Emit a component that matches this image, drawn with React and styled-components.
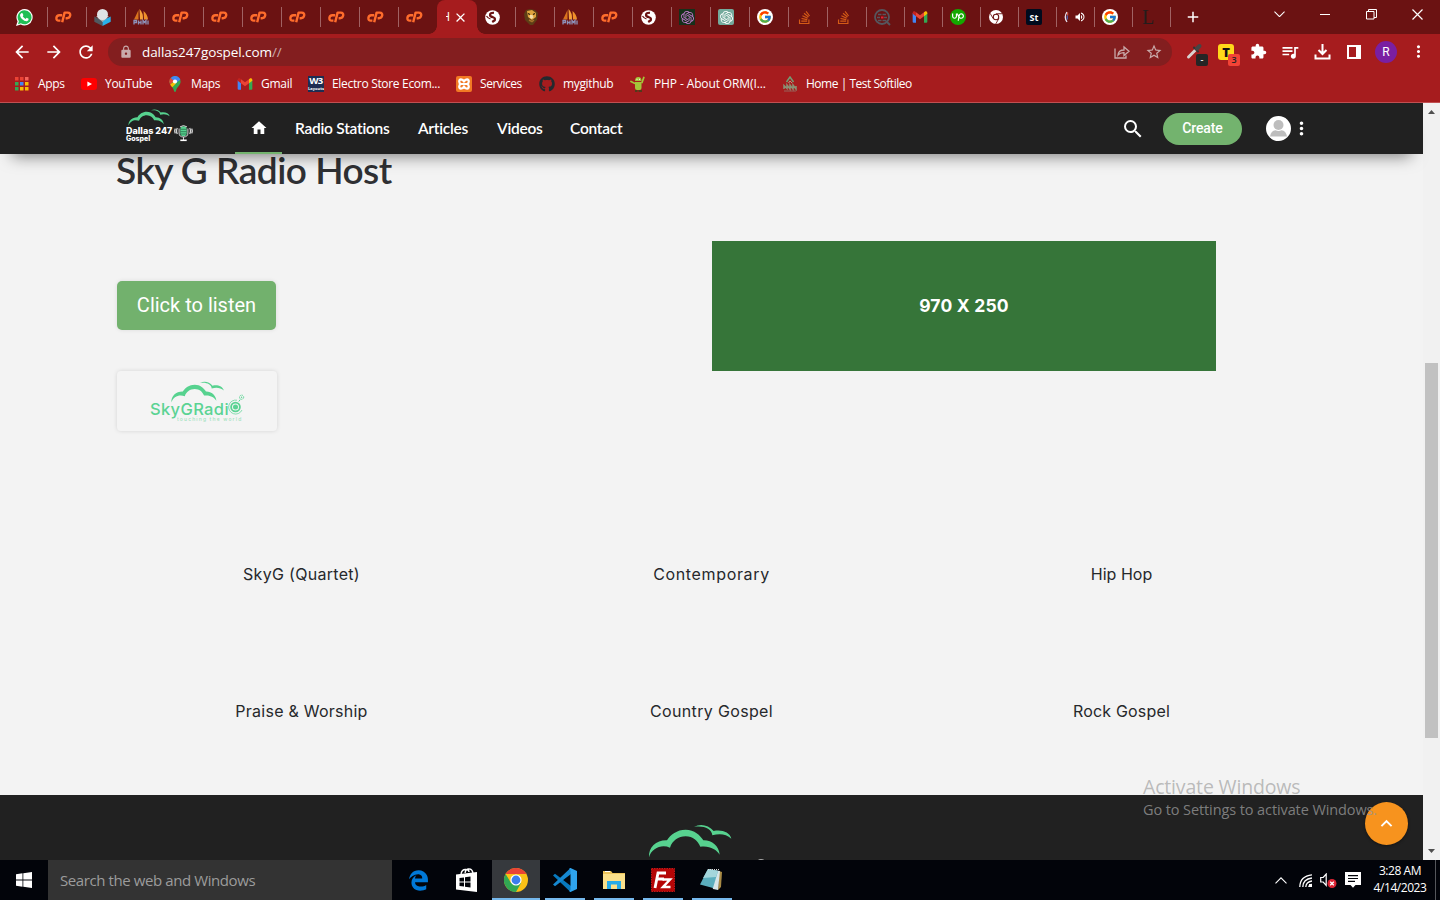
import React from "react";
import styled, { createGlobalStyle, css } from "styled-components";
import { FaGithub, FaEdgeLegacy, FaStackOverflow, FaUpwork } from "react-icons/fa6";
import { SiOpenai } from "react-icons/si";
import { FcGoogle } from "react-icons/fc";
import {
  MdArrowBack, MdArrowForward, MdRefresh, MdLock, MdStarBorder, MdExtension,
  MdQueueMusic, MdMoreVert, MdHome, MdSearch, MdAdd, MdClose, MdVolumeUp,
  MdKeyboardArrowUp,
} from "react-icons/md";

const segoe = '"Open Sans", "Noto Sans", sans-serif';

const GlobalStyle = createGlobalStyle`
  * { box-sizing: border-box; }
  body { margin: 0; background: #f3f3f3; overflow: hidden; }
  svg { display: block; flex: none; }
`;

const Screen = styled.div`
  position: relative;
  width: 1440px;
  height: 900px;
  display: flex;
  flex-direction: column;
  overflow: hidden;
  font-family: ${segoe};
`;

/* Browser chrome */
const TabStrip = styled.div`
  display: flex;
  height: 34px;
  padding-left: 9px;
  background: #6b1212;
  color: #fff;
`;
const Tab = styled.div`
  display: flex;
  align-items: center;
  flex: none;
  width: ${(p) => p.$w || 39}px;
  height: 34px;
  padding-left: 7px;
  &::after {
    content: "";
    width: 1px;
    height: 20px;
    margin-left: auto;
    background: ${(p) => (p.$noLine ? "transparent" : "#a06263")};
  }
`;
const ActiveTab = styled.div`
  display: flex;
  align-items: center;
  flex: none;
  width: 40px;
  margin-left: -1px;
  padding-left: 9px;
  height: 34px;
  background: #a61c1e;
  border-radius: 8px 8px 0 0;
  position: relative;
  &::before, &::after {
    content: "";
    position: absolute;
    bottom: 0;
    width: 8px;
    height: 8px;
  }
  &::before { left: -8px; background: radial-gradient(circle at 0 0, transparent 7.5px, #a61c1e 8px); }
  &::after { right: -8px; background: radial-gradient(circle at 100% 0, transparent 7.5px, #a61c1e 8px); }
`;
const ClippedTitle = styled.span`
  width: 4px;
  overflow: hidden;
  font-size: 12px;
  line-height: 16px;
  margin-right: 3px;
  direction: rtl;
`;
const Favicon = styled.span`
  display: flex;
  align-items: center;
  justify-content: center;
  flex: none;
  width: 16px;
  height: 16px;
  color: ${(p) => p.$color || "#fff"};
  background: ${(p) => p.$bg || "none"};
  border-radius: ${(p) => p.$r || 0};
  font: ${(p) => p.$font || "700 9px " + segoe};
`;
const NewTab = styled.div`
  display: flex;
  align-items: center;
  padding-left: 13px;
`;
const WindowControls = styled.div`
  display: flex;
  margin-left: auto;
  height: 28px;
  & > span { width: 46px; display: grid; place-items: center; }
`;

const Toolbar = styled.div`
  display: flex;
  align-items: center;
  height: 35px;
  padding-left: 6px;
  background: #a61c1e;
  color: #fff;
`;
const ToolSlot = styled.div`
  position: relative;
  display: grid;
  place-items: center;
  flex: none;
  width: 32px;
  height: 32px;
`;
const Omnibox = styled.div`
  display: flex;
  align-items: center;
  width: 1064px;
  height: 28px;
  margin: 0 6px;
  padding: 0 2px 0 11px;
  border-radius: 14px;
  background: #831e1f;
  color: #c9aaaa;
`;
const Url = styled.span`
  flex: 1;
  margin-left: 9px;
  font-size: 13.5px;
  letter-spacing: -0.08px;
  line-height: 20px;
  b { font-weight: 400; color: #fff; }
`;
const ExtBadge = styled.span`
  position: absolute;
  left: ${(p) => p.$x}px;
  top: 18px;
  width: 12px;
  height: 12px;
  border-radius: 2px;
  background: ${(p) => p.$bg};
  color: ${(p) => p.$fg};
  font: 600 9px/12px ${segoe};
  text-align: center;
`;
const ExtT = styled.span`
  width: 16px;
  height: 16px;
  border-radius: 3px;
  background: #ffd91a;
  color: #111;
  font: 800 13px/16px ${segoe};
  text-align: center;
`;
const Profile = styled.span`
  width: 22px;
  height: 22px;
  border-radius: 50%;
  background: #7a1fa2;
  font: 400 12px/22px Roboto, sans-serif;
  text-align: center;
`;

const Bookmarks = styled.div`
  display: flex;
  align-items: center;
  gap: 16px;
  height: 34px;
  padding: 0 14px 4px;
  background: #a61c1e;
  border-bottom: 1px solid #c05052;
  color: #fff;
`;
const Bookmark = styled.div`
  display: flex;
  align-items: center;
  gap: 8px;
  font-size: 12px;
  line-height: 16px;
  white-space: nowrap;
`;
const BookmarkText = styled.span`
  width: ${(p) => p.$w}px;
  letter-spacing: ${(p) => p.$ls}px;
`;

/* Web page */
const Viewport = styled.div`
  display: flex;
  height: 757px;
`;
const Page = styled.div`
  width: 1423px;
  display: flex;
  flex-direction: column;
  background: #f3f3f3;
`;
const Nav = styled.header`
  position: relative;
  display: flex;
  align-items: stretch;
  flex: none;
  height: 51px;
  padding-left: 126px;
  background: #212121;
  color: #fff;
  box-shadow: 0 14px 16px -12px rgba(0, 0, 0, 0.5);
`;
const NavLogo = styled.div`
  width: 109px;
  padding: 6px 0 0;
  display: flex;
  flex-direction: column;
  & > svg { margin-left: 2px; }
`;
const NavLogoRow = styled.div`
  display: flex;
  height: 18px;
  & > svg { margin-top: -1px; }
`;
const LogoWords = styled.div`
  width: 48px;
  white-space: nowrap;
  font: 800 9px/10px Inter, sans-serif;
  div + div { font-size: 7px; line-height: 8px; margin-top: -1px; }
`;
const HomeLink = styled.div`
  display: grid;
  place-items: center;
  width: 47px;
  border-bottom: 2px solid #73b36e;
`;
const NavLink = styled.a`
  width: ${(p) => p.$w}px;
  margin-left: ${(p) => p.$gap}px;
  font: 600 15.5px/51px Lato, sans-serif;
  letter-spacing: -0.25px;
  white-space: nowrap;
`;
const NavActions = styled.div`
  display: flex;
  align-items: center;
  margin-left: auto;
  padding-right: 111px;
`;
const CreateButton = styled.div`
  width: 79px;
  height: 32px;
  margin: 0 24px 0 18px;
  border-radius: 16px;
  background: #73b36e;
  font: 500 14px/31px Roboto, sans-serif;
  letter-spacing: -0.1px;
  text-align: center;
`;
const Hero = styled.section`
  height: 343px;
  padding-left: 117px;
`;
const Title = styled.h1`
  margin: 0 0 0 -1px;
  color: #2f3033;
  font: 600 37px/32px Lato, sans-serif;
  letter-spacing: -0.5px;
  white-space: nowrap;
`;
const HeroColumns = styled.div`
  display: grid;
  grid-template-columns: 595px 504px;
`;
const ListenButton = styled.div`
  width: 159px;
  height: 49px;
  margin-top: 95px;
  border-radius: 5px;
  background: #72b16d;
  color: #fff;
  font: 400 20px/48px Roboto, sans-serif;
  text-align: center;
  box-shadow: 0 0 4px rgba(0, 0, 0, 0.1);
`;
const RadioCard = styled.div`
  display: flex;
  flex-direction: column;
  width: 160px;
  height: 60px;
  margin-top: 41px;
  padding: 10px 0 0 33px;
  border-radius: 4px;
  background: #f4f4f4;
  box-shadow: 0 0 4px rgba(0, 0, 0, 0.13);
  color: #5bd393;
  & > svg { margin-left: 21px; }
`;
const RadioName = styled.div`
  display: flex;
  height: 18px;
  margin-top: -3px;
  font: 500 16.5px/18px Inter, sans-serif;
  letter-spacing: 0.35px;
  span { width: 78px; white-space: nowrap; }
  svg { margin-top: -6px; }
`;
const Tagline = styled.div`
  margin-left: 27px;
  margin-top: -1px;
  font: 500 5px/5px Inter, sans-serif;
  letter-spacing: 1.15px;
  white-space: nowrap;
  opacity: 0.55;
`;
const AdBanner = styled.div`
  height: 130px;
  margin-top: 55px;
  background: #367539;
  color: #fff;
  font: 700 17.5px/130px Inter, sans-serif;
  letter-spacing: 0.2px;
  text-align: center;
`;
const Genres = styled.section`
  display: grid;
  grid-template-columns: repeat(3, 410px);
  grid-auto-rows: 137px;
  height: 298px;
  justify-content: center;
  padding-top: 9px;
`;
const Genre = styled.div`
  color: #26282b;
  font: 400 16px/137px Inter, sans-serif;
  letter-spacing: ${(p) => p.$ls}px;
  text-align: center;
`;
const Footer = styled.footer`
  display: flex;
  flex: 1;
  background: #212121;
  padding: 29px 0 0 648px;
  overflow: hidden;
`;
const FooterMark = styled.span`
  width: 8px;
  height: 8px;
  margin: 35px 0 0 25px;
  border-radius: 50%;
  background: #a8a8a8;
`;
const ScrollTrack = styled.div`
  display: flex;
  flex-direction: column;
  align-items: center;
  justify-content: space-between;
  width: 17px;
  padding: 7px 0;
  background: #f1f1f1;
`;
const ScrollThumb = styled.div`
  width: 13px;
  height: 375px;
  margin-top: 138px;
  background: #c1c1c1;
`;
const ScrollTop = styled.div`
  position: absolute;
  left: 1365px;
  top: 802px;
  width: 43px;
  height: 43px;
  display: grid;
  place-items: center;
  border-radius: 50%;
  background: #f7931e;
  color: #fff;
  box-shadow: 0 1px 3px rgba(0, 0, 0, 0.4);
`;
const Watermark = styled.div`
  position: absolute;
  left: 1143px;
  top: 774px;
  color: rgba(150, 150, 150, 0.62);
  white-space: nowrap;
  font: 400 19.5px/26px ${segoe};
  letter-spacing: -0.17px;
  div + div { font-size: 14.5px; line-height: 20px; letter-spacing: -0.1px; color: rgba(150, 150, 150, 0.8); }
`;

/* Windows taskbar */
const Taskbar = styled.div`
  display: flex;
  height: 40px;
  background: #02040a;
  color: #fff;
`;
const StartButton = styled.div`
  width: 48px;
  display: grid;
  place-items: center;
`;
const SearchBox = styled.div`
  width: 344px;
  margin-right: 2px;
  padding-left: 12px;
  background: #333;
  color: #9c9c9c;
  font: 400 15px/41px ${segoe};
  letter-spacing: -0.41px;
`;
const TaskItem = styled.div`
  position: relative;
  display: grid;
  place-items: center;
  width: 48px;
  margin-right: 1px;
  background: ${(p) => (p.$active ? "#36393d" : "none")};
  ${(p) => p.$open && css`
    &::after {
      content: "";
      position: absolute;
      bottom: 0;
      left: ${p.$active ? 0 : 4}px;
      right: ${p.$active ? 0 : 4}px;
      height: 2px;
      background: #76b9ed;
    }
  `}
`;
const Tray = styled.div`
  display: flex;
  align-items: center;
  margin-left: auto;
  padding-right: 4px;
`;
const TrayIcons = styled.div`
  display: flex;
  align-items: center;
  gap: 8px;
  & > svg:first-child { margin-right: 4px; }
`;
const Clock = styled.div`
  width: 54px;
  margin: 0 8px 0 12px;
  text-align: center;
  font: 400 12px/17px ${segoe};
  letter-spacing: -0.45px;
  white-space: nowrap;
  padding-bottom: 2px;
`;
const ShowDesktop = styled.div`
  width: 1px;
  height: 40px;
  background: #55575b;
`;

/* Drawings */
const Cloud = ({ width, height }) => (
  <svg width={width} height={height} viewBox="0 0 250 102" fill="#57d28f">
    <path d="M2 100C0 70 24 48 56 49C66 32 86 17 112 17C138 17 156 34 165 49C190 48 212 66 214 92C204 76 184 64 156 68C148 50 134 37 112 37C90 37 72 50 65 71C40 60 10 72 2 100Z" />
    <path d="M137 9C155-2 180 2 196 21C220 16 244 24 249 44C234 30 214 28 192 34C190 14 165 4 137 9Z" />
  </svg>
);
const CPanel = () => (
  <svg width="17" height="12" viewBox="0 0 17 12" fill="none" stroke="#ff6c2c" strokeWidth="2.4" strokeLinejoin="round">
    <path d="M7.200 4.200H4.300Q1.800 4.200 1.400 6.900 1.200 9.600 3.800 9.600H5.400" />
    <path d="M7.200 11.200L9.600 1.600H12.800Q15.600 1.700 15.200 4.600 14.600 7.200 12 7.200H10.600" />
  </svg>
);
const WhatsApp = () => (
  <svg width="17" height="17" viewBox="0 0 17 17">
    <path d="M8.600 0a8.200 8.200 0 1 1-3.900 15.500L0 17l1.500-4.600A8.300 8.300 0 0 1 8.600 0z" fill="#fff" />
    <path d="M8.600 1.300a7 7 0 1 1-3.700 13L2 15.200l.9-2.900A7 7 0 0 1 8.600 1.300z" fill="#20bf55" />
    <path d="M5.300 4.300q.8-.5 1.400.2l.7 1.700-.7 1.100q1 1.900 2.900 2.600l1-1.100 2 1q.3 1.900-1.700 2.500-2.200.3-4.900-2.300Q3.300 7 4.300 5.200z" fill="#fff" />
  </svg>
);
const Mic = () => (
  <svg width="19" height="17" viewBox="0 0 19 17" fill="none" stroke="#d5d5d5">
    <rect x="6.300" y="1.300" width="6.400" height="10" rx="3.200" fill="#57d28f" stroke="none" />
    <path d="M6.500 4.300h6M6.500 6.700h6M6.500 9h6" stroke="#20623f" strokeWidth=".7" />
    <path d="M5.100 3.500v4.500q0 4 4.400 4t4.400-4V3.500M6 1.900Q9.500-.8 13 1.900M9.500 12v3" strokeWidth="1" />
    <path d="M6.300 15.300h6.400" strokeWidth="1.600" stroke="#fff" />
    <path d="M3.300 3q-1.600 3 0 6M1.400 3.600q-1.400 2.500 0 4.800M15.700 3q1.600 3 0 6M17.600 3.600q1.400 2.500 0 4.800" strokeWidth="1.300" />
  </svg>
);
const Disc = () => (
  <svg width="18" height="21" viewBox="0 0 18 21" fill="none" stroke="#5bd393">
    <circle cx="7.500" cy="13" r="4.400" strokeWidth="1.800" />
    <circle cx="7.500" cy="13" r="2.500" fill="#5bd393" stroke="none" />
    <path d="M9 6.200A7 7 0 1 0 14 16" strokeWidth=".7" />
    <circle cx="13.600" cy="3.200" r="2.100" strokeWidth=".9" strokeDasharray="1.500 .7" />
    <circle cx="13.600" cy="3.200" r=".7" fill="#5bd393" stroke="none" />
    <path d="M10.800 7.500l1.500-2" />
  </svg>
);
const Gmail = ({ size = 15 }) => (
  <svg width={size} height={size} viewBox="0 0 24 24">
    <path d="M1 6l5 3.500v11H2.500A1.500 1.500 0 0 1 1 19z" fill="#4285f4" />
    <path d="M23 6l-5 3.500v11h3.500A1.500 1.500 0 0 0 23 19z" fill="#34a853" />
    <path d="M18 5v6l5-3.700V6c0-2.500-2.600-3.200-4-2z" fill="#fbbc04" />
    <path d="M1 6v1.300L6 11V5L5 4C3.500 2.800 1 3.500 1 6z" fill="#c5221f" />
    <path d="M6 5l6 4.500L18 5v6l-6 4.500L6 11z" fill="#ea4335" />
  </svg>
);
const ChromeLogo = ({ size, mono }) => (
  <svg width={size} height={size} viewBox="0 0 24 24">
    <circle cx="12" cy="12" r="12" fill={mono ? "#fff" : "#fbc116"} />
    {!mono && <path d="M1.600 6A12 12 0 0 1 22.400 6H12z" fill="#ea4335" />}
    {!mono && <path d="M1.600 6A12 12 0 0 0 12 24l5-9H7z" fill="#31a853" />}
    <circle cx="12" cy="12" r="5.600" fill={mono ? "#6b1212" : "#fff"} />
    {mono && <path d="M12 6.400h10.600M7.200 14.800L1.900 5.600M16.800 14.800l-5.300 9.200" stroke="#6b1212" strokeWidth="1.500" />}
    <circle cx="12" cy="12" r={mono ? 3.8 : 4.4} fill={mono ? "#fff" : "#3b7ded"} />
  </svg>
);
const Sails = () => (
  <svg width="16" height="16" viewBox="0 0 16 16">
    <path d="M5.500 1L1 10.500H5.500z" fill="#d9731d" />
    <path d="M6.500 0q4 4 3.500 10.500H7z" fill="#f7a13a" />
    <path d="M10.500 2q4 3 4.500 8.500H11z" fill="#f0902a" />
    <path d="M1 15.500v-4h2.500v2H1M5.500 15.500v-4M5.500 13.500h2.500M8 11.500v4M10 15.500v-4l1.500 2 1.500-2v4M15 15.500v-4" fill="none" stroke="#8d91b9" strokeWidth="1.300" />
  </svg>
);
const Cube = () => (
  <svg width="17" height="17" viewBox="0 0 17 17">
    <path d="M.3 7.500l8.200 4V17L.3 12.800z" fill="#50585f" />
    <path d="M16.700 7.500l-8.200 4V17l8.200-4.200z" fill="#29b1ea" />
    <path d="M2 7l6.500 6L15 7z" fill="#a9b3b8" />
    <circle cx="8.500" cy="5.500" r="5.500" fill="#dfe3e5" />
  </svg>
);
const Globe = () => (
  <svg width="15" height="15" viewBox="0 0 15 15">
    <circle cx="7.500" cy="7.500" r="7.300" fill="#fff" />
    <path d="M9 2.800Q5 2.500 5 5 5.200 6.700 8 7.200 10.600 8 9.800 10.200L7.200 12" stroke="#6b1212" strokeWidth="2.200" fill="none" />
    <path d="M1.500 6Q3 8.500 5.500 9" stroke="#6b1212" strokeWidth="1.200" fill="none" />
  </svg>
);
const Lion = () => (
  <svg width="14" height="16" viewBox="0 0 14 16">
    <path d="M2 1l4-1 5 1 3 3-1 7-4 5H6L1 11 0 5z" fill="#5d3d16" />
    <path d="M3 2l5-1 4 3v4l-4 3-4-3z" fill="#e0a43e" />
    <path d="M4 4.500l2 1M9 5.500l2-1" stroke="#26180a" strokeWidth="1.200" />
    <path d="M6 6l2.500 0 1 2.500-2 1.500-2-1.500z" fill="#f4dca8" />
    <path d="M5 11l3 1.500 2-1.500" stroke="#a8722b" strokeWidth="1.500" fill="none" />
  </svg>
);
const Firewall = () => (
  <svg width="17" height="17" viewBox="0 0 17 17" fill="none" stroke="#56565d">
    <circle cx="8" cy="8" r="7" strokeWidth="1.800" />
    <path d="M12 12l4 4" strokeWidth="2" />
    <path d="M4 5.500h3.500M8.500 5.500H12M3 8.500h3M10 8.500h3M4 11.500h3.500M8.500 11.500H12" strokeWidth="1.500" />
    <path d="M7 8.500h2.500" stroke="#e42535" strokeWidth="2" />
  </svg>
);
const AppsGrid = () => (
  <svg width="14" height="14" viewBox="0 0 14 14">
    {["#ea4335", "#ea4335", "#f7635a", "#34a853", "#4285f4", "#fbbc04", "#34a853", "#fbbc04", "#fbbc04"].map((c, i) => (
      <rect key={i} x={(i % 3) * 5} y={Math.floor(i / 3) * 5} width="3.500" height="3.500" fill={c} />
    ))}
  </svg>
);
const YouTube = () => (
  <svg width="16" height="12" viewBox="0 0 16 12">
    <rect width="16" height="12" rx="3" fill="#f00" />
    <path d="M6.400 3.400v5.200L11 6z" fill="#fff" />
  </svg>
);
const MapsPin = () => (
  <svg width="12" height="16" viewBox="0 0 12 16">
    <path d="M6 0a5.600 5.600 0 0 1 5.600 5.600c0 4-4 5.400-4.600 9.400q-1 2-2 0C4.500 11.500.4 9.500.4 5.600A5.600 5.600 0 0 1 6 0z" fill="#34a853" />
    <path d="M6 0Q10 0 11.300 3.800L6 7.500 1.700 2Q3.500 0 6 0z" fill="#4285f4" />
    <path d="M1.700 2L5 5 1.300 8.500Q-.8 4.500 1.700 2z" fill="#ea4335" />
    <path d="M4.500 6L1.200 8.600Q2 10 3.300 11.300L7 7.500z" fill="#fbbc04" />
    <circle cx="6" cy="5.500" r="2.100" fill="#fff" />
  </svg>
);
const XamppMark = () => (
  <svg width="12" height="12" viewBox="0 0 12 12" fill="none" stroke="#fff" strokeWidth="2.200" strokeLinejoin="round">
    <path d="M4.500 6H3Q1.200 5.500 1.200 3.500T3 1.300Q5 1.300 6 3.500 7 1.300 9 1.300q1.800.2 1.800 2.200T9 6H3Q1.200 6.500 1.200 8.500T3 10.700Q5 10.700 6 8.500q1 2.200 3 2.200 1.800-.2 1.800-2.200T9 6z" />
  </svg>
);
const Droid = () => (
  <svg width="16" height="16" viewBox="0 0 16 16" fill="#a4c639">
    <path d="M5 6h6.500v6q0 2-2 2H7q-2 0-2-2zM5 5q0-4 3.300-4T11.500 5z" />
    <path d="M4.500 7.200L1 5.500M12 6.500l1.800-5" stroke="#a4c639" strokeWidth="1.800" strokeLinecap="round" />
    <path d="M5 15h2.500M8.500 15H12" stroke="#35451b" strokeWidth="1.600" />
    <path d="M6.500 3.300h1M9 3.300h1" stroke="#fff" />
  </svg>
);
const SoftMark = () => (
  <svg width="14" height="16" viewBox="0 0 14 16" fill="none">
    <path d="M3.500 6L7 1l3.500 5" stroke="#739d74" strokeWidth="1.500" />
    <path d="M5.500 7L7 5l2 2" stroke="#c49181" />
    <path d="M1 13V9.500l3 3V9l3 4V9l3 4V9l3 4v-3" stroke="#8b8f73" strokeWidth="1.500" />
    <path d="M1 15h12" stroke="#97635b" />
  </svg>
);
const ShareIcon = () => (
  <svg width="16" height="14" viewBox="0 0 16 14" fill="none" stroke="currentColor" strokeWidth="1.300">
    <path d="M1 3.500V13h11v-2.500M4 10c.3-3.500 2.500-5 6-5V2l5 4.300-5 4.200V7.700C7.500 7.600 5.500 8.300 4 10z" />
  </svg>
);
const Dropper = () => (
  <svg width="17" height="17" viewBox="0 0 17 17" strokeLinecap="round">
    <path d="M2.500 14L9 7.500" stroke="#d8d2d0" strokeWidth="3" />
    <path d="M8 4.500l4 4" stroke="#333" strokeWidth="2" />
    <path d="M11 5.500L13.500 3" stroke="#454545" strokeWidth="4" />
  </svg>
);
const Download = () => (
  <svg width="17" height="17" viewBox="0 0 17 17" fill="none" stroke="#fff" strokeWidth="2">
    <path d="M8.500 1v10M4.500 7l4 4 4-4M1.500 11.500V15.500h14v-4" />
  </svg>
);
const SidePanel = () => (
  <svg width="14" height="14" viewBox="0 0 14 14">
    <path d="M1 1h12v12H1z" fill="none" stroke="#fff" strokeWidth="2" />
    <path d="M9 1h4v12H9z" fill="#fff" />
  </svg>
);
const Person = () => (
  <svg width="25" height="25" viewBox="0 0 25 25">
    <circle cx="12.500" cy="12.500" r="12.500" fill="#fff" />
    <circle cx="12.500" cy="9" r="5" fill="#bdbdbd" />
    <path d="M4 20.500q1-6 5.500-6.300 3 1.600 6 0 4.500.3 5.500 6.300z" fill="#bdbdbd" />
  </svg>
);
const WinLogo = ({ size }) => (
  <svg width={size} height={size} viewBox="0 0 16 16" fill="#fff">
    <path d="M0 2.200L6.500 1.300v6.200H0zM7.300 1.200L16 0v7.500H7.300zM0 8.400h6.500v6.300L0 13.800zM7.300 8.400H16V16l-8.700-1.200z" />
  </svg>
);
const Store = () => (
  <svg width="22" height="25" viewBox="0 0 22 25">
    <path d="M5 6Q6 1 10 1.500 13 1.500 13 4M9 5Q10 0 13.500 1 16 1 17 5" fill="none" stroke="#fff" strokeWidth="1.400" />
    <path d="M0 6.500L21 4v20L0 21.500z" fill="#fff" />
    <path d="M3.500 10l4.500-.6v4.100H3.500zM9 9.200l5.500-.7v5H9zM3.500 14.500H8v4l-4.500-.6zM9 14.500h5.500v5L9 18.700z" fill="#02040a" />
  </svg>
);
const VsCode = () => (
  <svg width="24" height="24" viewBox="0 0 24 24">
    <path d="M0 7.500L2 5.800 18 18v6L17 23.500z" fill="#0879bd" />
    <path d="M0 16.500L2 18.200 18 6V0l-1 .5z" fill="#1688d1" />
    <path d="M17.500 0L24 3v18l-6.500 3-1.500-1 1.500-1V2L16 1z" fill="#2fa4ee" />
  </svg>
);
const Explorer = () => (
  <svg width="22" height="20" viewBox="0 0 22 20">
    <path d="M0 1h8l1.500 2H22v16H0z" fill="#edc45a" />
    <path d="M0 4h22v15H0z" fill="#fbe08a" />
    <path d="M2 1.500h5" stroke="#fff" />
    <path d="M4 11h14v8h-4v-4.500H8V19H4z" fill="#27abe9" />
  </svg>
);
const FileZilla = () => (
  <svg width="24" height="24" viewBox="0 0 24 24">
    <path d="M.5.5h23v23H.5z" fill="#b50606" stroke="#c71717" strokeDasharray="1.500 1" />
    <path d="M4 20L7 5h8M6 11h7" fill="none" stroke="#fff" strokeWidth="2.800" />
    <path d="M11.500 11.500H19L12 19h7.500" fill="none" stroke="#fff" strokeWidth="2.500" />
  </svg>
);
const Notepad = () => (
  <svg width="24" height="24" viewBox="0 0 24 24">
    <path d="M19 3l3 1-1 15-3 3z" fill="#a88a45" />
    <path d="M8 1l12 2-2 19-5-1z" fill="#d7e5e8" />
    <path d="M8 1l10 2-5 17L0 16.500z" fill="#5baebe" />
    <path d="M8 1l10 2-2 6L3 10z" fill="#a4d6dc" />
    <path d="M8 1.500h12" stroke="#d9d9d9" strokeDasharray="1 1" />
  </svg>
);
const Wifi = () => (
  <svg width="13" height="13" viewBox="0 0 13 13" fill="none" stroke="#fff" strokeWidth="1.300">
    <path d="M.8 13Q1 2 13 .8M3.800 13Q4 5 13 4M6.800 13Q7 8 13 7M9.800 13Q10 10.500 13 10.300" />
    <rect x="10" y="10" width="3" height="3" fill="#fff" stroke="none" />
  </svg>
);
const Muted = () => (
  <svg width="17" height="15" viewBox="0 0 17 15">
    <path d="M.7 4.500h2.500l3-3.500v11.500l-3-3.500H.7z" fill="none" stroke="#fff" strokeWidth="1.200" />
    <circle cx="12" cy="10.500" r="4.500" fill="#dc2434" />
    <path d="M10.200 8.700l3.600 3.600m0-3.600l-3.600 3.600" stroke="#fff" strokeWidth="1.300" />
  </svg>
);
const ActionCenter = () => (
  <svg width="16" height="16" viewBox="0 0 16 16">
    <path d="M0 0h16v13h-5.500L8 15.800 5.500 13H0z" fill="#fff" />
    <path d="M3 3.700h10M3 6.500h10M3 9.300h7" stroke="#02040a" strokeWidth="1.200" />
  </svg>
);
const Chevron = ({ up, width, weight = 1.1 }) => (
  <svg width={width} height={width / 2 + 1} viewBox="0 0 12 7" fill="none" stroke="#fff" strokeWidth={weight}>
    <path d={up ? "M.5 6.300L6 .8l5.500 5.500" : "M.5.7L6 6.200 11.500.7"} />
  </svg>
);
const Arrow = ({ up }) => (
  <svg width="7" height="4" viewBox="0 0 7 4"><path d={up ? "M0 4L3.500 0 7 4z" : "M0 0h7L3.500 4z"} fill="#505050" /></svg>
);

const plain = (el) => ({ el });
const cp = plain(<CPanel />);
const stack = { c: "#d55b16", el: <FaStackOverflow size={15} /> };
const google = { bg: "#fff", r: "50%", el: <FcGoogle size={14} /> };

const leftTabs = [plain(<WhatsApp />), cp, plain(<Cube />), plain(<Sails />), cp, cp, cp, cp, cp, cp, cp];
const rightTabs = [
  plain(<Globe />), plain(<Lion />), plain(<Sails />), cp, plain(<Globe />),
  { c: "#c77bd2", bg: "#16301b", el: <SiOpenai size={13} /> },
  { bg: "#74aa9c", r: "2px", el: <SiOpenai size={13} /> },
  google, stack, stack,
];
const narrowTabs = [
  plain(<Firewall />), plain(<Gmail size={16} />),
  { bg: "#14a800", r: "50%", el: <FaUpwork size={12} /> },
  plain(<ChromeLogo size={14} mono />),
  { bg: "#000b1d", r: "2px", el: "St" },
];

const TabItem = ({ tab, w, last }) => (
  <Tab $w={w} $noLine={last}>
    <Favicon $color={tab.c} $bg={tab.bg} $r={tab.r} $font={tab.font}>{tab.el}</Favicon>
  </Tab>
);

const AudioSliver = () => (
  <svg width="10" height="12" viewBox="0 0 10 12" fill="none">
    <path d="M3 1Q-.5 6 3 11" stroke="#e6e0ee" strokeWidth="1.300" />
    <path d="M3.700 1.500v3" stroke="#e8604f" />
    <path d="M3.200 4.500v4" stroke="#4b7fe8" />
  </svg>
);

const bookmarks = [
  ["Apps", 27, -0.3, <AppsGrid />],
  ["YouTube", 46, -0.3, <YouTube />],
  ["Maps", 30, -0.35, <MapsPin />],
  ["Gmail", 31, -0.25, <Gmail size={16} />],
  ["Electro Store Ecom...", 108, -0.32, "w3"],
  ["Services", 43, -0.45, "xampp"],
  ["mygithub", 51, -0.35, "github"],
  ["PHP - About ORM(I...", 112, -0.12, <Droid />],
  ["Home | Test Softileo", 106, -0.48, <SoftMark />],
];
const W3 = styled.span`
  width: 16px;
  height: 16px;
  background: #1d2d52;
  font: 700 9.5px/10px ${segoe};
  letter-spacing: -0.6px;
  text-align: center;
  small { display: block; font-size: 4px; line-height: 5px; letter-spacing: 0; }
`;
const bookmarkIcon = (i) => {
  if (i === "w3") return <W3>W3<small>Layouts</small></W3>;
  if (i === "xampp") return <Favicon $bg="#f27a24" $r="2px"><XamppMark /></Favicon>;
  if (i === "github") return <Favicon $color="#24292e"><FaGithub size={16} /></Favicon>;
  return <Favicon>{i}</Favicon>;
};

const genres = [
  ["SkyG (Quartet)", 0.3], ["Contemporary", 0.65], ["Hip Hop", 0],
  ["Praise & Worship", 0.25], ["Country Gospel", 0.35], ["Rock Gospel", 0.18],
];

export default function App() {
  return (
    <Screen>
      <GlobalStyle />
      <TabStrip>
        {leftTabs.map((t, i) => <TabItem key={i} tab={t} last={i === 10} />)}
        <ActiveTab><ClippedTitle>H</ClippedTitle><MdClose size={15} /></ActiveTab>
        {rightTabs.map((t, i) => <TabItem key={i} tab={t} />)}
        {narrowTabs.map((t, i) => <TabItem key={i} tab={t} w={38} />)}
        <Tab $w={38}><AudioSliver /><MdVolumeUp size={12} /></Tab>
        <TabItem tab={google} w={38} />
        <TabItem tab={{ c: "#241d1d", font: '400 20px/22px "Liberation Serif", serif', el: "L" }} w={38} />
        <NewTab><MdAdd size={18} /></NewTab>
        <WindowControls>
          <span><Chevron width={11} /></span>
          <span><svg width="10" height="1"><path d="M0 0h10v1H0z" fill="#fff" /></svg></span>
          <span><svg width="11" height="11" fill="none" stroke="#fff"><path d="M.5 2.500h7.500v7.500H.5zM2.500 2.500V.5h8v8H8" /></svg></span>
          <span><svg width="11" height="11" stroke="#fff" strokeWidth="1.200"><path d="M.5.5l10 10m0-10l-10 10" /></svg></span>
        </WindowControls>
      </TabStrip>
      <Toolbar>
        <ToolSlot><MdArrowBack size={20} /></ToolSlot>
        <ToolSlot><MdArrowForward size={20} /></ToolSlot>
        <ToolSlot><MdRefresh size={20} /></ToolSlot>
        <Omnibox>
          <MdLock size={14} />
          <Url><b>dallas247gospel.com</b>//</Url>
          <ToolSlot><ShareIcon /></ToolSlot>
          <ToolSlot><MdStarBorder size={18} /></ToolSlot>
        </Omnibox>
        <ToolSlot><Dropper /><ExtBadge $x={18} $bg="#252525" $fg="#fff">-</ExtBadge></ToolSlot>
        <ToolSlot><ExtT>T</ExtT><ExtBadge $x={18} $bg="#f44336" $fg="#222">3</ExtBadge></ToolSlot>
        <ToolSlot><MdExtension size={17} /></ToolSlot>
        <ToolSlot><MdQueueMusic size={20} /></ToolSlot>
        <ToolSlot><Download /></ToolSlot>
        <ToolSlot><SidePanel /></ToolSlot>
        <ToolSlot><Profile>R</Profile></ToolSlot>
        <ToolSlot><MdMoreVert size={19} /></ToolSlot>
      </Toolbar>
      <Bookmarks>
        {bookmarks.map(([text, w, ls, icon]) => (
          <Bookmark key={text}>{bookmarkIcon(icon)}<BookmarkText $w={w} $ls={ls}>{text}</BookmarkText></Bookmark>
        ))}
      </Bookmarks>

      <Viewport>
        <Page>
          <Nav>
            <NavLogo>
              <Cloud width={42} height={17} />
              <NavLogoRow>
                <LogoWords><div>Dallas 247</div><div>Gospel</div></LogoWords>
                <Mic />
              </NavLogoRow>
            </NavLogo>
            <HomeLink><MdHome size={18} /></HomeLink>
            <NavLink $w={95} $gap={13}>Radio Stations</NavLink>
            <NavLink $w={51} $gap={28}>Articles</NavLink>
            <NavLink $w={46} $gap={28}>Videos</NavLink>
            <NavLink $w={53} $gap={27}>Contact</NavLink>
            <NavActions>
              <MdSearch size={24} />
              <CreateButton>Create</CreateButton>
              <Person />
              <MdMoreVert size={21} />
            </NavActions>
          </Nav>
          <Hero>
            <Title>Sky G Radio Host</Title>
            <HeroColumns>
              <div>
                <ListenButton>Click to listen</ListenButton>
                <RadioCard>
                  <Cloud width={53} height={22} />
                  <RadioName><span>SkyGRadi</span><Disc /></RadioName>
                  <Tagline>touching the world</Tagline>
                </RadioCard>
              </div>
              <AdBanner>970 X 250</AdBanner>
            </HeroColumns>
          </Hero>
          <Genres>
            {genres.map(([g, ls]) => <Genre key={g} $ls={ls}>{g}</Genre>)}
          </Genres>
          <Footer><Cloud width={84} height={34} /><FooterMark /></Footer>
        </Page>
        <ScrollTrack><Arrow up /><ScrollThumb /><Arrow /></ScrollTrack>
      </Viewport>
      <ScrollTop><MdKeyboardArrowUp size={23} /></ScrollTop>
      <Watermark><div>Activate Windows</div><div>Go to Settings to activate Windows.</div></Watermark>

      <Taskbar>
        <StartButton><WinLogo size={16} /></StartButton>
        <SearchBox>Search the web and Windows</SearchBox>
        <TaskItem><FaEdgeLegacy size={21} color="#0078d7" /></TaskItem>
        <TaskItem><Store /></TaskItem>
        <TaskItem $open $active><ChromeLogo size={24} /></TaskItem>
        <TaskItem $open><VsCode /></TaskItem>
        <TaskItem $open><Explorer /></TaskItem>
        <TaskItem $open><FileZilla /></TaskItem>
        <TaskItem $open><Notepad /></TaskItem>
        <Tray>
          <TrayIcons>
            <Chevron up width={12} />
            <Wifi />
            <Muted />
            <ActionCenter />
          </TrayIcons>
          <Clock>3:28 AM<br />4/14/2023</Clock>
          <ShowDesktop />
        </Tray>
      </Taskbar>
    </Screen>
  );
}
